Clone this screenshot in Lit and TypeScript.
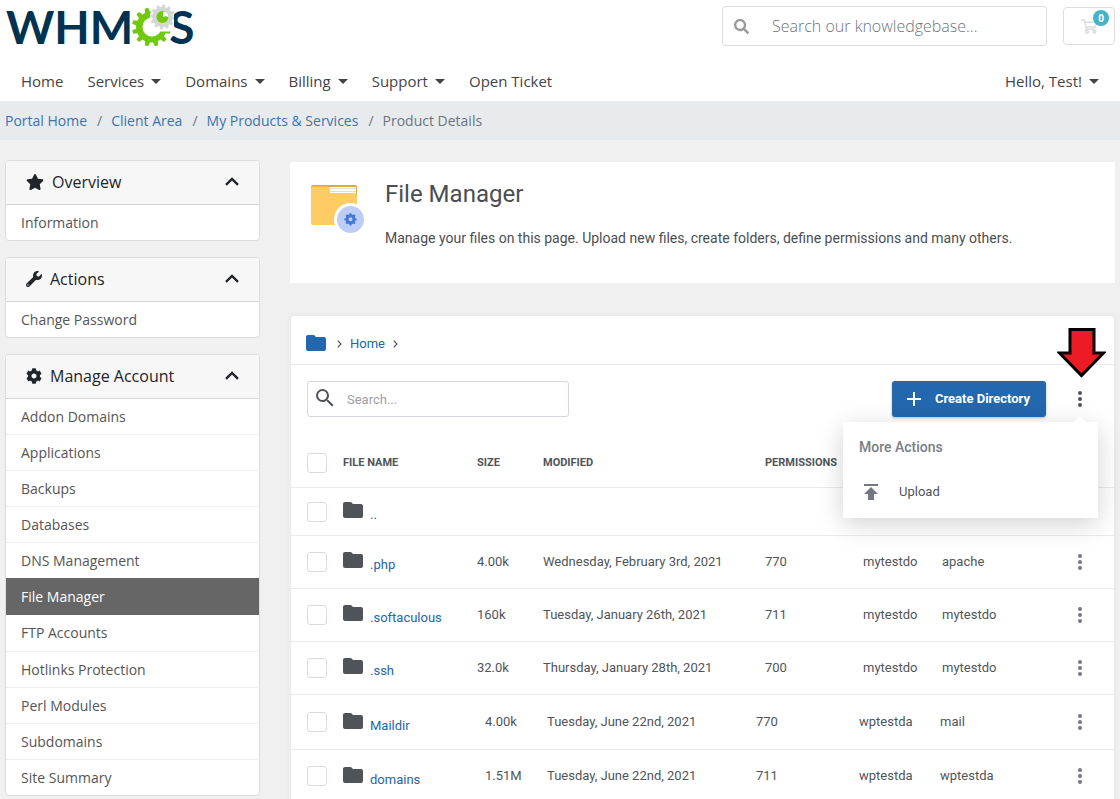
import { LitElement, html, css, nothing } from "lit";
import { customElement, property } from "lit/decorators.js";

const PATHS = {
  star: "M259.3 17.8L194 150.2 47.9 171.5c-26.2 3.8-36.7 36.1-17.7 54.6l105.7 103-25 145.5c-4.5 26.3 23.2 46 46.4 33.7L288 439.6l130.7 68.7c23.2 12.2 50.9-7.4 46.4-33.7l-25-145.5 105.7-103c19-18.5 8.5-50.8-17.7-54.6L382 150.2 316.7 17.8c-11.7-23.6-45.6-23.9-57.4 0z",
  wrench: "M507.73 109.1c-2.24-9.03-13.54-12.09-20.12-5.51l-74.36 74.36-67.88-11.31-11.31-67.88 74.36-74.36c6.62-6.62 3.43-17.9-5.66-20.16-47.38-11.74-99.55.91-136.58 37.93-39.64 39.64-50.55 97.1-34.05 147.2L18.74 402.76c-24.99 24.99-24.99 65.51 0 90.5 24.99 24.99 65.51 24.99 90.5 0l213.21-213.21c50.12 16.71 107.47 5.68 147.37-34.22 37.07-37.07 49.7-89.32 37.91-136.73zM64 472c-13.25 0-24-10.75-24-24 0-13.26 10.75-24 24-24s24 10.74 24 24c0 13.25-10.75 24-24 24z",
  cog: "M487.4 315.7l-42.6-24.6c4.3-23.2 4.3-47 0-70.2l42.6-24.6c4.9-2.8 7.1-8.6 5.5-14-11.1-35.6-30-67.8-54.7-94.6-3.8-4.1-10-5.1-14.8-2.3L380.8 110c-17.9-15.4-38.5-27.3-60.8-35.1V25.8c0-5.6-3.9-10.5-9.4-11.7-36.7-8.2-74.3-7.8-109.2 0-5.5 1.2-9.4 6.1-9.4 11.7V75c-22.2 7.9-42.8 19.8-60.8 35.1L88.7 85.5c-4.9-2.8-11-1.9-14.8 2.3-24.7 26.7-43.6 58.9-54.7 94.6-1.7 5.4.6 11.2 5.5 14L67.3 221c-4.3 23.2-4.3 47 0 70.2l-42.6 24.6c-4.9 2.8-7.1 8.6-5.5 14 11.1 35.6 30 67.8 54.7 94.6 3.8 4.1 10 5.1 14.8 2.3l42.6-24.6c17.9 15.4 38.5 27.3 60.8 35.1v49.2c0 5.6 3.9 10.5 9.4 11.7 36.7 8.2 74.3 7.8 109.2 0 5.5-1.2 9.4-6.1 9.4-11.7v-49.2c22.2-7.9 42.8-19.8 60.8-35.1l42.6 24.6c4.9 2.8 11 1.9 14.8-2.3 24.7-26.7 43.6-58.9 54.7-94.6 1.5-5.5-.7-11.3-5.6-14.1zM256 336c-44.1 0-80-35.9-80-80s35.9-80 80-80 80 35.9 80 80-35.9 80-80 80z",
  find: "M505 442.7L405.3 343c-4.5-4.5-10.6-7-17-7H372c27.6-35.3 44-79.7 44-128C416 93.1 322.9 0 208 0S0 93.1 0 208s93.1 208 208 208c48.3 0 92.7-16.4 128-44v16.3c0 6.4 2.5 12.5 7 17l99.7 99.7c9.4 9.4 24.6 9.4 33.9 0l28.3-28.3c9.4-9.4 9.4-24.6.1-34zM208 336c-70.7 0-128-57.2-128-128 0-70.7 57.2-128 128-128 70.7 0 128 57.2 128 128 0 70.7-57.2 128-128 128z",
  magnify: "M9.5,3A6.5,6.5 0 0,1 16,9.5C16,11.11 15.41,12.59 14.44,13.73L14.71,14H15.5L20.5,19L19,20.5L14,15.5V14.71L13.73,14.44C12.59,15.41 11.11,16 9.5,16A6.5,6.5 0 0,1 3,9.5A6.5,6.5 0 0,1 9.5,3M9.5,5C7,5 5,7 5,9.5C5,12 7,14 9.5,14C12,14 14,12 14,9.5C14,7 12,5 9.5,5Z",
  folder: "M10,4H4C2.89,4 2,4.89 2,6V18A2,2 0 0,0 4,20H20A2,2 0 0,0 22,18V8C22,6.89 21.1,6 20,6H12L10,4Z",
};

/** Outline of a toothed wheel centred on cx, cy. */
function gear(cx: number, cy: number, outer: number, inner: number, teeth: number, turn = 0): string {
  const step = (Math.PI * 2) / teeth;
  const pts: string[] = [];
  for (let i = 0; i < teeth; i++) {
    const a = i * step + turn;
    for (const [r, k] of [[inner, -0.3], [outer, -0.18], [outer, 0.18], [inner, 0.3]]) {
      pts.push(`${(cx + r * Math.cos(a + k * step)).toFixed(2)} ${(cy + r * Math.sin(a + k * step)).toFixed(2)}`);
    }
  }
  return `M${pts.join("L")}Z`;
}

const icon = (d: string, box: string, cls = "") =>
  html`<svg class=${cls} viewBox=${box} fill="currentColor" aria-hidden="true"><path d=${d}></path></svg>`;

const dots = html`<svg class="dots" viewBox="0 0 4 16" fill="currentColor" aria-hidden="true">
  <circle cx="2" cy="2" r="2"></circle><circle cx="2" cy="8" r="2"></circle><circle cx="2" cy="14" r="2"></circle>
</svg>`;

const smallChevron = html`<svg class="sep" viewBox="0 0 5 8" fill="none" stroke="currentColor" stroke-width="1.2" aria-hidden="true"><path d="M0.7 0.7L4 4L0.7 7.3"></path></svg>`;

@customElement("site-header")
class SiteHeader extends LitElement {
  static styles = css`
    :host { display: block; background: #fff; font-family: "Open Sans", sans-serif; }
    a { text-decoration: none; color: inherit; }
    .top { display: flex; justify-content: space-between; align-items: center; height: 52px; padding: 0 5px; }
    .logo { display: flex; align-items: center; padding: 2px 0 0 1px; font: 700 46px/60px Lato, sans-serif; color: #003252; }
    .gears { position: relative; width: 44px; height: 48px; margin: 0 -5px 0 -3px; }
    .tools { display: flex; align-items: center; gap: 16px; }
    .search { display: flex; align-items: center; box-sizing: border-box; width: 325px; height: 40px; padding: 0 11px; gap: 23px; border: 1px solid #ddd; border-radius: 4px; color: #999; }
    .find { width: 15px; height: 15px; flex: none; }
    input { flex: 1; min-width: 0; border: 0; outline: 0; padding: 0; background: none; font: 300 16px/24px "Open Sans", sans-serif; color: #495057; }
    input::placeholder { color: #6c757d; opacity: 1; }
    .cart { position: relative; box-sizing: border-box; display: flex; align-items: center; justify-content: center; width: 52px; height: 38px; border: 1px solid #ddd; border-radius: 4px; color: #ddd; }
    .cart svg { width: 17px; height: 15px; }
    .badge { position: absolute; top: 2px; right: 5px; width: 16px; height: 16px; border-radius: 8px; background: #45b3c9; color: #fff; font: 700 10px/16px "Open Sans", sans-serif; text-align: center; }
    nav { display: flex; justify-content: space-between; padding: 17px 21px 8px; font-size: 15px; line-height: 24px; color: #444; }
    .links { display: flex; gap: 24px; }
    .link { display: flex; align-items: center; gap: 7px; }
    .link.menu::after { content: ""; border: 5px solid transparent; border-top-color: currentColor; border-bottom: 0; }
    .crumbs { display: flex; margin: 0; padding: 8px 5px; background: #e8ebee; list-style: none; font-size: 14px; line-height: 23px; color: #6c757d; }
    .crumbs li + li::before { content: "/"; padding: 0 9px 0 10px; }
    .crumbs a { color: #3b73af; }
  `;

  render() {
    const link = (text: string, menu = true) => html`<a class="link ${menu ? "menu" : ""}" href="#">${text}</a>`;
    return html`
      <div class="top">
        <a class="logo" href="#" aria-label="WHMCS">
          <span>WHM</span>
          <svg class="gears" viewBox="130 3 44 48" aria-hidden="true">
            <path fill="#70c80f" d=${gear(151.5, 27, 19.5, 15.5, 12, 0.26)}></path>
            <circle cx="152" cy="27" r="9.5" fill="#fff"></circle>
            <path fill="#fff" d="M152 27L154 6L178 4L178 31.5L160 31.5Q156 29 152 27Z"></path>
            <circle cx="163" cy="17" r="13.2" fill="#fff"></circle>
            <path fill="#d4d6d7" d=${gear(162.5, 17, 12.4, 10.2, 12, 0.1)}></path>
            <circle cx="162.5" cy="17" r="6" fill="#70c80f"></circle>
            <path fill="#fff" d="M163 17L163.5 11.5Q168.5 12 168.6 17.5Q166 15.5 163 17Z"></path>
          </svg>
          <span>S</span>
        </a>
        <div class="tools">
          <label class="search">
            ${icon(PATHS.find, "0 0 512 512", "find")}
            <input type="search" placeholder="Search our knowledgebase..." aria-label="Search our knowledgebase" />
          </label>
          <a class="cart" href="#" aria-label="Shopping cart">
            <svg viewBox="0 0 17 15" fill="none" stroke="currentColor" stroke-width="1.6" aria-hidden="true">
              <path d="M0 1h3.2l2.2 9.2h9M3.8 3.2h12L14.4 8H5"></path>
              <circle cx="6" cy="12.8" r="1.3"></circle><circle cx="13.4" cy="12.8" r="1.3"></circle>
            </svg>
            <span class="badge">0</span>
          </a>
        </div>
      </div>
      <nav>
        <div class="links">
          ${link("Home", false)} ${link("Services")} ${link("Domains")} ${link("Billing")} ${link("Support")} ${link("Open Ticket", false)}
        </div>
        ${link("Hello, Test!")}
      </nav>
      <ol class="crumbs">
        <li><a href="#">Portal Home</a></li>
        <li><a href="#">Client Area</a></li>
        <li><a href="#">My Products &amp; Services</a></li>
        <li>Product Details</li>
      </ol>
    `;
  }
}

@customElement("side-card")
class SideCard extends LitElement {
  @property() heading = "";
  @property() glyph: "star" | "wrench" | "cog" = "star";
  @property() active = "";
  @property({ attribute: false }) items: string[] = [];

  static styles = css`
    :host { display: block; overflow: hidden; border: 1px solid #dcdcdc; border-radius: 4px; background: #fff; font-family: "Open Sans", sans-serif; }
    .head { display: flex; align-items: center; box-sizing: border-box; width: 100%; height: 44px; padding: 0 20px 2px; gap: 8px; border: 0; border-bottom: 1px solid #d6d6d6; background: #f7f7f7; color: #212529; font: 400 16px/24px "Open Sans", sans-serif; text-align: left; }
    .glyph { width: 16px; height: 16px; }
    .glyph.star { width: 18px; }
    .title { flex: 1; }
    .up { width: 14px; height: 9px; }
    ul { margin: 0; padding: 0; list-style: none; }
    a { display: block; padding: 6px 15px 5px; border-bottom: 1px solid #efefef; color: #555; font-size: 14px; line-height: 24px; text-decoration: none; }
    li:last-child a { border-bottom: 0; }
    a.active { margin: -1px 0 0; padding: 7px 15px 5px; border-color: #666; background: #666; color: #fff; }
    li.after a { padding-bottom: 6px; }
  `;

  render() {
    const current = this.items.indexOf(this.active);
    return html`
      <button class="head" aria-expanded="true">
        ${icon(PATHS[this.glyph], this.glyph === "star" ? "0 0 576 512" : "0 0 512 512", `glyph ${this.glyph}`)}
        <span class="title">${this.heading}</span>
        <svg class="up" viewBox="0 0 14 9" fill="none" stroke="currentColor" stroke-width="2.4" aria-hidden="true"><path d="M1 7.8L7 1.9L13 7.8"></path></svg>
      </button>
      <ul>
        ${this.items.map((t, i) => html`<li class=${current >= 0 && i === current + 1 ? "after" : ""}><a class=${i === current ? "active" : ""} href="#">${t}</a></li>`)}
      </ul>
    `;
  }
}

interface Entry { name: string; size?: string; modified?: string; mode?: string; owner?: string; group?: string; }

const HEAD_ENTRIES: Entry[] = [
  { name: ".." },
  { name: ".php", size: "4.00k", modified: "Wednesday, February 3rd, 2021", mode: "770", owner: "mytestdo", group: "apache" },
  { name: ".softaculous", size: "160k", modified: "Tuesday, January 26th, 2021", mode: "711", owner: "mytestdo", group: "mytestdo" },
  { name: ".ssh", size: "32.0k", modified: "Thursday, January 28th, 2021", mode: "700", owner: "mytestdo", group: "mytestdo" },
];
const MORE_ENTRIES: Entry[] = [
  { name: "Maildir", size: "4.00k", modified: "Tuesday, June 22nd, 2021", mode: "770", owner: "wptestda", group: "mail" },
  { name: "domains", size: "1.51M", modified: "Tuesday, June 22nd, 2021", mode: "711", owner: "wptestda", group: "wptestda" },
];

@customElement("file-panel")
class FilePanel extends LitElement {
  static styles = css`
    :host { display: block; border-radius: 4px; background: #fff; box-shadow: 0 0 6px rgba(60, 60, 90, 0.08); font: 400 13px/20px Roboto, sans-serif; color: #505459; }
    a { color: #2565ab; text-decoration: none; }
    button { font: inherit; color: inherit; background: none; border: 0; padding: 0; }
    .path { display: flex; align-items: center; gap: 8px; height: 49px; padding: 8px 15px 0; box-sizing: border-box; border-bottom: 1px solid #e8e8ee; }
    .folder { display: block; flex: none; width: 20px; height: 16px; }
    .path .folder { margin: 0 3px 3px 0; color: #2367ae; }
    .sep { width: 5px; height: 8px; }
    .bar { display: flex; align-items: center; justify-content: space-between; padding: 16px 24px 21px 16px; }
    .find { display: flex; align-items: center; gap: 10px; box-sizing: border-box; width: 262px; height: 36px; padding: 0 5px; border: 1px solid #d6d6e2; border-radius: 3px; }
    .find svg { flex: none; width: 24px; height: 24px; margin-bottom: 3px; }
    .find input { flex: 1; min-width: 0; padding: 2px 0 0; border: 0; outline: 0; font: inherit; color: inherit; }
    .find input::placeholder { color: #a0a0a4; opacity: 1; }
    .actions { display: flex; align-items: center; gap: 24px; }
    .create { display: flex; align-items: center; gap: 14px; height: 36px; padding: 0 16px 0 15px; border-radius: 3px; background: #2367ae; color: #fff; font-weight: 700; box-shadow: 0 1px 3px rgba(0, 0, 0, 0.25); }
    .create svg { width: 14px; height: 14px; }
    .more { position: relative; display: flex; }
    .kebab { display: flex; justify-content: center; width: 20px; }
    .dots { width: 4px; height: 16px; }
    .pointer { position: absolute; left: -13px; bottom: 31px; width: 49px; height: 50px; }
    .more .kebab { padding: 2px 0; }
    .menu { position: absolute; z-index: 2; top: 33px; right: -8px; box-sizing: border-box; width: 255px; height: 96px; padding: 15px 16px; background: #fff; box-shadow: 0 6px 24px rgba(0, 0, 0, 0.18); }
    .menu::before { content: ""; position: absolute; top: -6px; right: 12px; border: 6px solid transparent; border-top: 0; border-bottom-color: #fff; }
    .menu h2 { margin: 0; font-size: 14px; line-height: 20px; font-weight: 500; color: #7a7e87; }
    .upload { display: flex; align-items: center; gap: 21px; margin-top: 25px; padding-left: 5px; }
    .upload svg { width: 14px; height: 16px; color: #747881; }
    table { width: 100%; table-layout: fixed; border-collapse: separate; border-spacing: 0; }
    th, td { padding: 0; text-align: left; vertical-align: middle; font-weight: 400; border-bottom: 1px solid #ececf0; white-space: nowrap; }
    th { height: 49px; font-size: 11px; font-weight: 700; }
    td { height: 52px; }
    .parent td { height: 47px; }
    .more-rows tr:first-child td { height: 54px; }
    th:first-child, td:first-child { padding-left: 16px; }
    input[type="checkbox"] { appearance: none; display: block; box-sizing: border-box; width: 20px; height: 20px; margin: 0; border: 1px solid #d9d9e4; border-radius: 3px; background: #fff; }
    .name { display: flex; gap: 7px; height: 20px; line-height: 26px; }
    .more-rows .name { padding-top: 2px; }
    .name .folder { color: #505459; }
    td .kebab { height: 16px; color: #747881; }
  `;

  private cols(widths: number[]) {
    return html`<colgroup>${widths.map((w) => html`<col style="width:${w}px" />`)}<col /><col style="width:44px" /></colgroup>`;
  }

  private row(e: Entry) {
    return html`<tr class=${e.name === ".." ? "parent" : ""}>
      <td><input type="checkbox" aria-label="Select ${e.name}" /></td>
      <td><a class="name" href="#">${icon(PATHS.folder, "2 4 20 16", "folder")}<span>${e.name}</span></a></td>
      <td>${e.size}</td><td>${e.modified}</td><td>${e.mode}</td><td>${e.owner}</td><td>${e.group}</td>
      <td>${e.size ? html`<button class="kebab" aria-label="Actions for ${e.name}">${dots}</button>` : nothing}</td>
    </tr>`;
  }

  render() {
    return html`
      <div class="path">${icon(PATHS.folder, "2 4 20 16", "folder")}${smallChevron}<a href="#">Home</a>${smallChevron}</div>
      <div class="bar">
        <label class="find">${icon(PATHS.magnify, "0 0 24 24")}<input type="text" placeholder="Search..." aria-label="Search files" /></label>
        <div class="actions">
          <button class="create">
            <svg viewBox="0 0 14 14" stroke="currentColor" stroke-width="2" aria-hidden="true"><path d="M7 0v14M0 7h14"></path></svg>
            Create Directory
          </button>
          <div class="more">
            <button class="kebab" aria-label="More actions" aria-expanded="true">${dots}</button>
            <svg class="pointer" viewBox="0 0 49 50" aria-hidden="true">
              <path d="M13 1.5H37V25H46.5L24.5 47.5L2.5 25H13Z" fill="#ed1c24" stroke="#000" stroke-width="3"></path>
            </svg>
            <div class="menu">
              <h2>More Actions</h2>
              <button class="upload">${icon("M5 4v2h14V4H5zm0 10h4v6h6v-6h4l-7-7-7 7z", "5 4 14 16")}Upload</button>
            </div>
          </div>
        </div>
      </div>
      <table>
        ${this.cols([52, 134, 66, 222, 98, 79])}
        <thead><tr>
          <th><input type="checkbox" aria-label="Select all" /></th>
          <th>FILE NAME</th><th>SIZE</th><th>MODIFIED</th><th>PERMISSIONS</th><th></th><th></th><th></th>
        </tr></thead>
        <tbody>${HEAD_ENTRIES.map((e) => this.row(e))}</tbody>
      </table>
      <table class="more-rows">
        ${this.cols([52, 142, 62, 209, 103, 81])}
        <tbody>${MORE_ENTRIES.map((e) => this.row(e))}</tbody>
      </table>
    `;
  }
}

@customElement("app-root")
class AppRoot extends LitElement {
  static styles = css`
    :host { display: block; min-height: 100vh; background: #f0f0f0; }
    .page { display: grid; grid-template-columns: 255px minmax(0, 1fr); gap: 30px; padding: 20px 5px 0; }
    .side { display: flex; flex-direction: column; gap: 16px; }
    .main { display: flex; flex-direction: column; gap: 33px; padding-top: 2px; }
    .intro { display: flex; gap: 20px; padding: 17px 21px 34px; background: #fff; font-family: Roboto, sans-serif; color: #4a4e53; }
    .art { flex: none; width: 54px; height: 50px; margin-top: 5px; }
    h1 { margin: 0; font-size: 24px; line-height: 30px; font-weight: 400; }
    p { margin: 18px 0 0; font-size: 14px; line-height: 22px; }
    file-panel { margin: 0 1px; }
  `;

  render() {
    return html`
      <site-header></site-header>
      <div class="page">
        <aside class="side">
          <side-card heading="Overview" glyph="star" .items=${["Information"]}></side-card>
          <side-card heading="Actions" glyph="wrench" .items=${["Change Password"]}></side-card>
          <side-card heading="Manage Account" glyph="cog" active="File Manager" .items=${[
            "Addon Domains", "Applications", "Backups", "Databases", "DNS Management", "File Manager",
            "FTP Accounts", "Hotlinks Protection", "Perl Modules", "Subdomains", "Site Summary",
          ]}></side-card>
        </aside>
        <main class="main">
          <section class="intro">
            <svg class="art" viewBox="0 0 54 50" aria-hidden="true">
              <path fill="#dea738" d="M2 1H44a2 2 0 0 1 2 2V12H0V3a2 2 0 0 1 2-2Z"></path>
              <path fill="#fff" d="M17 3H45V10H17Z"></path>
              <path stroke="#ddd" d="M18 4.5H45M18 7.5H45"></path>
              <path fill="#fecb65" d="M2 2.5H16a3 3 0 0 1 3 3V9H44a2 2 0 0 1 2 2V39a2 2 0 0 1-2 2H2a2 2 0 0 1-2-2V4.5a2 2 0 0 1 2-2Z"></path>
              <circle cx="39.5" cy="35.5" r="16.5" fill="#fff"></circle>
              <circle cx="39.5" cy="35.5" r="13.5" fill="#bccef6"></circle>
              <path fill="#4475d8" fill-rule="evenodd" d="${gear(39.5, 35.3, 6.2, 5, 8)}M41.5 35.3a2 2 0 1 0-4 0a2 2 0 1 0 4 0Z"></path>
            </svg>
            <div>
              <h1>File Manager</h1>
              <p>Manage your files on this page. Upload new files, create folders, define permissions and many others.</p>
            </div>
          </section>
          <file-panel></file-panel>
        </main>
      </div>
    `;
  }
}
